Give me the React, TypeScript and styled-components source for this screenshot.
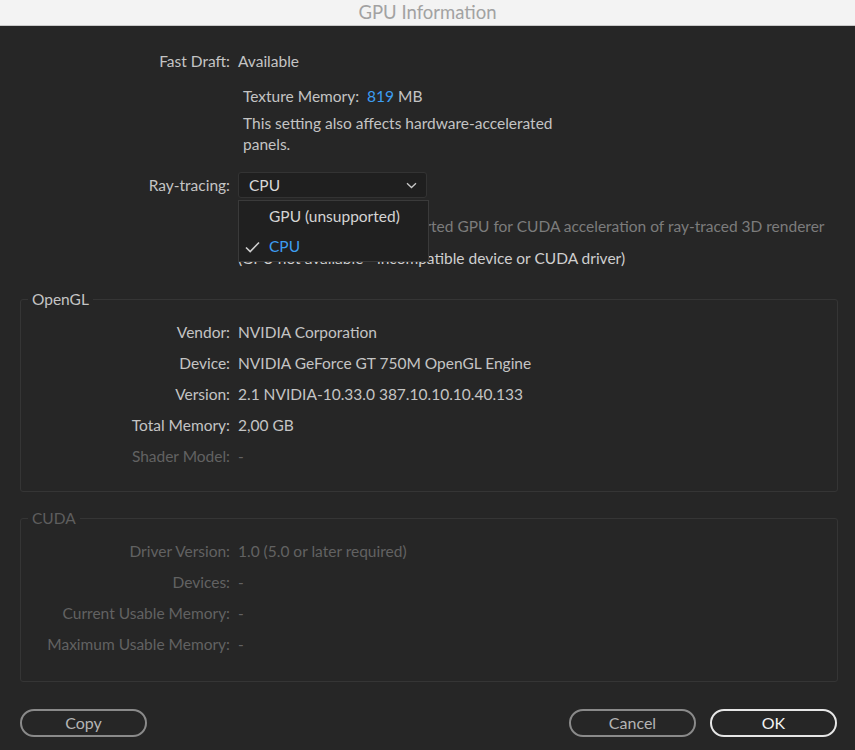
import React from "react";
import styled, { createGlobalStyle } from "styled-components";

const GlobalStyle = createGlobalStyle`
  html, body {
    margin: 0;
    padding: 0;
    background: #262626;
  }
  * {
    box-sizing: border-box;
  }
`;

const FONT = `Lato, "Open Sans", "Liberation Sans", sans-serif`;

const openGlRows = [
  { label: "Vendor:", value: "NVIDIA Corporation" },
  { label: "Device:", value: "NVIDIA GeForce GT 750M OpenGL Engine" },
  { label: "Version:", value: "2.1 NVIDIA-10.33.0 387.10.10.10.40.133" },
  { label: "Total Memory:", value: "2,00 GB" },
  { label: "Shader Model:", value: "-", dim: true },
];

const cudaRows = [
  { label: "Driver Version:", value: "1.0 (5.0 or later required)" },
  { label: "Devices:", value: "-" },
  { label: "Current Usable Memory:", value: "-" },
  { label: "Maximum Usable Memory:", value: "-" },
];

function Chevron() {
  return (
    <svg width="11" height="7" viewBox="0 0 11 7">
      <path d="M1 1.2 L5.5 5.5 L10 1.2" fill="none" stroke="#c8c8c8" strokeWidth="1.3" />
    </svg>
  );
}

function Check() {
  return (
    <svg width="15" height="12" viewBox="0 0 15 12">
      <path d="M1 6.5 L5.2 10.6 L14 1.5" fill="none" stroke="#cfcfcf" strokeWidth="1.6" />
    </svg>
  );
}

function App() {
  return (
    <Window>
      <GlobalStyle />
      <TitleBar>GPU Information</TitleBar>

      <Content>
        <FieldRow $labelWidth={210}>
          <Label>Fast Draft:</Label>
          <Value>Available</Value>
        </FieldRow>

        <Note>
          <NoteLine $gap={6}>
            Texture Memory:&nbsp;&nbsp;<Accent>819</Accent> MB
          </NoteLine>
          <NoteLine>This setting also affects hardware-accelerated</NoteLine>
          <NoteLine>panels.</NoteLine>
        </Note>

        <SelectRow $labelWidth={210}>
          <Label>Ray-tracing:</Label>
          <SelectWrap>
            <SelectBox>
              <span>CPU</span>
              <Chevron />
            </SelectBox>
            <Menu>
              <MenuItem>
                <CheckSlot />
                GPU (unsupported)
              </MenuItem>
              <MenuItem $selected>
                <CheckSlot>
                  <Check />
                </CheckSlot>
                CPU
              </MenuItem>
            </Menu>
          </SelectWrap>
        </SelectRow>

        <Description>
          <DescLine $muted>
            Requires the use of a supported GPU for CUDA acceleration of ray-traced 3D renderer
          </DescLine>
          <DescLine>(GPU not available - incompatible device or CUDA driver)</DescLine>
        </Description>

        <Group $top={9} $bottom={19}>
          <Legend>OpenGL</Legend>
          {openGlRows.map((r) => (
            <FieldRow key={r.label} $labelWidth={209} $dim={r.dim}>
              <Label>{r.label}</Label>
              <Value>{r.value}</Value>
            </FieldRow>
          ))}
        </Group>

        <Group $top={16} $bottom={21} $dim>
          <Legend>CUDA</Legend>
          {cudaRows.map((r) => (
            <FieldRow key={r.label} $labelWidth={209} $dim>
              <Label>{r.label}</Label>
              <Value>{r.value}</Value>
            </FieldRow>
          ))}
        </Group>

        <Footer>
          <Button>Copy</Button>
          <Spacer />
          <Button>Cancel</Button>
          <Button $primary>OK</Button>
        </Footer>
      </Content>
    </Window>
  );
}

export default App;

const Window = styled.div`
  width: 855px;
  height: 750px;
  background: #262626;
  font-family: ${FONT};
  font-size: 15.5px;
  color: #c4c4c4;
  overflow: hidden;
`;

const TitleBar = styled.div`
  height: 26px;
  background: #f3f3f3;
  border-bottom: 1px solid #c9c9c9;
  display: flex;
  align-items: center;
  justify-content: center;
  font-size: 18.5px;
  color: #a2a2a2;
  padding-bottom: 2px;
`;

const Content = styled.div`
  padding: 20px 17px 0 20px;
  display: flex;
  flex-direction: column;
`;

const FieldRow = styled.div<{ $labelWidth: number; $dim?: boolean }>`
  display: grid;
  grid-template-columns: ${(p) => p.$labelWidth}px 1fr;
  column-gap: 8px;
  height: 31px;
  line-height: 31px;
  color: ${(p) => (p.$dim ? "#626262" : "#c4c4c4")};
  white-space: nowrap;
`;

const Label = styled.div`
  text-align: right;
`;

const Value = styled.div``;

const Note = styled.div`
  margin: 9px 0 0 223px;
`;

const NoteLine = styled.div<{ $gap?: number }>`
  line-height: 21px;
  margin-bottom: ${(p) => p.$gap ?? 0}px;
`;

const Accent = styled.span`
  color: #3d9df2;
`;

const SelectRow = styled(FieldRow)`
  margin-top: 17px;
  height: 26px;
  line-height: 26px;
`;

const SelectWrap = styled.div`
  position: relative;
  width: 189px;
`;

const SelectBox = styled.div`
  height: 26px;
  display: flex;
  align-items: center;
  justify-content: space-between;
  padding: 0 9px 0 10px;
  background: #1f1f1f;
  border: 1px solid #333333;
  border-radius: 3px;
  color: #d8d8d8;
`;

const Menu = styled.div`
  position: absolute;
  top: 28px;
  left: 0;
  width: 191px;
  height: 62px;
  background: #202020;
  border: 1px solid #3a3a3a;
  z-index: 2;
`;

const MenuItem = styled.div<{ $selected?: boolean }>`
  height: 30px;
  display: flex;
  align-items: center;
  color: ${(p) => (p.$selected ? "#3d9df2" : "#d4d4d4")};
`;

const CheckSlot = styled.span`
  width: 30px;
  padding-left: 6px;
  padding-top: 2px;
  display: flex;
  align-items: center;
`;

const Description = styled.div`
  margin: 18px 0 0 218px;
  white-space: nowrap;
`;

const DescLine = styled.div<{ $muted?: boolean }>`
  line-height: 21px;
  margin-bottom: 11px;
  color: ${(p) => (p.$muted ? "#7c7c7c" : "#cfcfcf")};
`;

const Group = styled.fieldset<{ $top: number; $bottom: number; $dim?: boolean }>`
  margin: ${(p) => p.$top}px 0 0 0;
  padding: 8px 0 ${(p) => p.$bottom}px 0;
  border: 1px solid #353535;
  border-radius: 3px;
  min-width: 0;

  legend {
    color: ${(p) => (p.$dim ? "#5e5e5e" : "#c4c4c4")};
  }
`;

const Legend = styled.legend`
  margin-left: 7px;
  padding: 0 4px;
  line-height: 20px;
`;

const Footer = styled.div`
  margin-top: 27px;
  display: flex;
  gap: 14px;
  padding-right: 1px;
`;

const Spacer = styled.div`
  flex: 1;
`;

const Button = styled.button<{ $primary?: boolean }>`
  width: 127px;
  height: 28px;
  border-radius: 14px;
  background: transparent;
  border: 2px solid ${(p) => (p.$primary ? "#e6e6e6" : "#8a8a8a")};
  color: ${(p) => (p.$primary ? "#f2f2f2" : "#b4b4b4")};
  font-family: ${FONT};
  font-size: 16px;
  padding: 0;
  line-height: 24px;
`;
